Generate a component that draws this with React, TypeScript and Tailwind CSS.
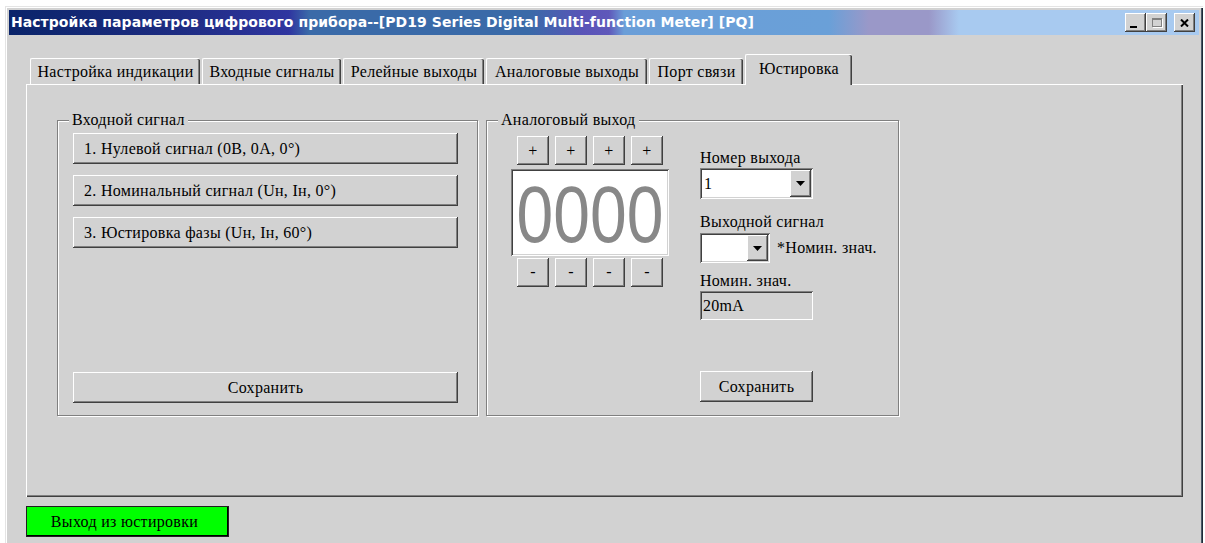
import React from 'react';

// classic 3D bevels
const raised =
  'bg-[#d2d2d2] shadow-[inset_-1px_-1px_#404040,inset_1px_1px_#ffffff,inset_-2px_-2px_#808080]';
const sunken =
  'shadow-[inset_1px_1px_#808080,inset_-1px_-1px_#ffffff,inset_2px_2px_#404040,inset_-2px_-2px_#d2d2d2]';

const tabs = [
  { label: 'Настройка индикации', width: 'w-[170px]' },
  { label: 'Входные сигналы', width: 'w-[139px]' },
  { label: 'Релейные выходы', width: 'w-[141px]' },
  { label: 'Аналоговые выходы', width: 'w-[161px]' },
  { label: 'Порт связи', width: 'w-[94px]' },
];

const steps = [
  '1. Нулевой сигнал (0В, 0А, 0°)',
  '2. Номинальный сигнал (Uн, Iн, 0°)',
  '3. Юстировка фазы (Uн, Iн, 60°)',
];

const Arrow = () => (
  <svg width="9" height="5" viewBox="0 0 9 5">
    <path d="M0 0h9L4.5 5z" fill="#000" />
  </svg>
);

const Combo: React.FC<{ value?: string; width: string }> = ({ value, width }) => (
  <div className={`${width} h-full bg-white ${sunken} flex items-stretch p-[2px]`}>
    <div className="flex-1 pl-[2px] flex items-center">{value}</div>
    <div className={`w-[21px] ${raised} flex items-center justify-center`}>
      <Arrow />
    </div>
  </div>
);

const TitleBar = () => (
  <div className="h-[25px] flex items-center pl-[2px] pr-[4px] bg-[linear-gradient(90deg,#0a246a_0px,#1d2c82_170px,#2f35a0_280px,#3a6aa8_300px,#3a6aa8_520px,#5a54b8_575px,#5f58ba_600px,#6a9ed8_615px,#6aa0d8_820px,#9a98c8_860px,#9a98c8_920px,#a8caf0_950px,#a8caf0_100%)]">
    <span className="flex-1 text-white font-bold text-[14px] font-['DejaVu_Sans',sans-serif] tracking-[0.05px] whitespace-nowrap">
      Настройка параметров цифрового прибора--[PD19 Series Digital Multi-function Meter] [PQ]
    </span>
    <div className="flex items-center">
      <div className={`w-[21px] h-[19px] ${raised} flex items-end pl-[5px] pb-[4px]`}>
        <div className="w-[7px] h-[2px] bg-black" />
      </div>
      <div className={`w-[21px] h-[19px] ${raised} flex items-center justify-center`}>
        <div className="w-[10px] h-[9px] border border-[#808080] border-t-2 shadow-[1px_1px_#ffffff]" />
      </div>
      <div className={`ml-[7px] w-[21px] h-[19px] ${raised} flex items-center justify-center`}>
        <svg width="9" height="8" viewBox="0 0 9 8">
          <path d="M1 0.5l7 7M8 0.5l-7 7" stroke="#000" strokeWidth="2" />
        </svg>
      </div>
    </div>
  </div>
);

export default function App() {
  return (
    <div className="w-[1205px] h-[543px] overflow-hidden bg-white pt-[6px] pl-[5px] font-['Liberation_Serif',serif] text-[16px] tracking-[0.3px] text-black">
      <div className="w-[1198px] h-[560px] bg-[#d2d2d2] p-[4px] shadow-[inset_1px_1px_#e4e4e4,inset_2px_2px_#ffffff,inset_-1px_0_#1e2a36,inset_-2px_0_#4a5866]">
        <TitleBar />

        <div className="pl-[17px] pr-[16px] pt-[19px]">
          {/* tab strip */}
          <div className="h-[30px] flex items-end gap-[2px] pl-[4px]">
            {tabs.map((tab) => (
              <div
                key={tab.label}
                className={`${tab.width} h-[26px] rounded-t-[2px] border-t border-l border-white shadow-[inset_-1px_0_#404040,inset_-2px_0_#808080] flex items-center justify-center whitespace-nowrap`}
              >
                {tab.label}
              </div>
            ))}
            <div className="relative z-10 w-[107px] h-[31px] -mb-[1px] bg-[#d2d2d2] rounded-t-[2px] border-t border-l border-white shadow-[inset_-1px_0_#404040,inset_-2px_0_#808080] flex items-center justify-center pb-[3px]">
              Юстировка
            </div>
          </div>

          {/* tab page */}
          <div className="h-[413px] border-t border-l border-white shadow-[inset_-1px_-1px_#404040,inset_-2px_-2px_#808080] pl-[30px] pt-[35px]">
            <div className="flex items-start gap-[8px]">
              {/* input signal group */}
              <div className="relative w-[421px] h-[296px] border border-[#808080] shadow-[1px_1px_#ffffff,inset_1px_1px_#ffffff]">
                <span className="absolute -top-[9px] left-[11px] px-[3px] bg-[#d2d2d2] leading-[16px]">
                  Входной сигнал
                </span>
                <div className="h-full flex flex-col gap-[11px] pl-[15px] pt-[12px] pb-[12px]">
                  {steps.map((s) => (
                    <div key={s} className={`w-[385px] h-[31px] ${raised} flex items-center pl-[11px]`}>
                      {s}
                    </div>
                  ))}
                  <div className={`mt-auto w-[385px] h-[31px] ${raised} flex items-center justify-center`}>
                    Сохранить
                  </div>
                </div>
              </div>

              {/* analog output group */}
              <div className="relative w-[413px] h-[296px] border border-[#808080] shadow-[1px_1px_#ffffff,inset_1px_1px_#ffffff]">
                <span className="absolute -top-[9px] left-[11px] px-[3px] bg-[#d2d2d2] leading-[16px]">
                  Аналоговый выход
                </span>
                <div className="flex pl-[24px] pt-[15px]">
                  <div className="w-[158px] flex flex-col">
                    <div className="flex gap-[6px] px-[6px]">
                      {[0, 1, 2, 3].map((i) => (
                        <div key={i} className={`w-[32px] h-[29px] ${raised} flex items-center justify-center text-[16px]`}>
                          +
                        </div>
                      ))}
                    </div>
                    <div className={`mt-[4px] h-[87px] bg-white ${sunken} flex items-center justify-center`}>
                      <span className="font-['Liberation_Sans',sans-serif] text-[66px] tracking-normal leading-[66px] text-[#888888] scale-y-[1.2] translate-y-[1px]">
                        0000
                      </span>
                    </div>
                    <div className="mt-[2px] flex gap-[6px] px-[6px]">
                      {[0, 1, 2, 3].map((i) => (
                        <div key={i} className={`w-[32px] h-[29px] ${raised} flex items-center justify-center pb-[2px]`}>
                          -
                        </div>
                      ))}
                    </div>
                  </div>

                  <div className="ml-[31px] mt-[13px] flex flex-col">
                    <div className="leading-[17px]">Номер выхода</div>
                    <div className="mt-[2px] h-[31px]">
                      <Combo value="1" width="w-[113px]" />
                    </div>
                    <div className="mt-[14px] leading-[17px]">Выходной сигнал</div>
                    <div className="mt-[3px] h-[30px] flex items-center">
                      <Combo width="w-[70px]" />
                      <span className="ml-[7px] whitespace-nowrap">*Номин. знач.</span>
                    </div>
                    <div className="mt-[9px] leading-[17px]">Номин. знач.</div>
                    <div className={`mt-[2px] w-[113px] h-[29px] ${sunken} flex items-center pl-[3px]`}>
                      20mA
                    </div>
                    <div className={`mt-[51px] w-[113px] h-[31px] ${raised} flex items-center justify-center`}>
                      Сохранить
                    </div>
                  </div>
                </div>
              </div>
            </div>
          </div>

          <div className="mt-[9px] w-[203px] h-[31px] bg-[#00ff00] border border-[#202020] shadow-[inset_-1px_-1px_#000000] flex items-center justify-center pr-[6px]">
            Выход из юстировки
          </div>
        </div>
      </div>
    </div>
  );
}
